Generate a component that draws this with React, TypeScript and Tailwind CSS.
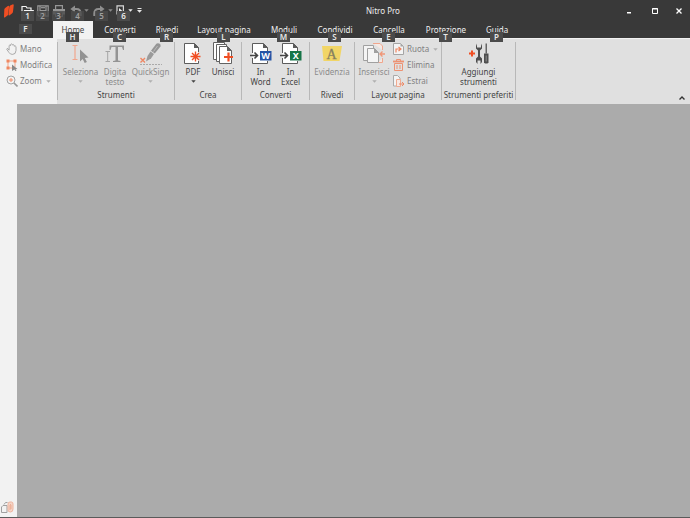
import type { ReactNode } from "react";

const orange = "#f04e23";

function KeyTip({ children, className = "" }: { children: ReactNode; className?: string }) {
  return (
    <span
      className={`absolute z-10 flex h-[10px] w-[13px] items-center justify-center text-[8px] leading-none font-semibold ${className}`}
    >
      {children}
    </span>
  );
}

function Caret({ className = "" }: { className?: string }) {
  return (
    <svg className={`h-[3px] w-[5px] shrink-0 ${className}`} viewBox="0 0 5 3" fill="currentColor">
      <path d="M0.3 0.3h4.4L2.5 2.7z" />
    </svg>
  );
}

function Logo() {
  return (
    <svg className="h-[14px] w-[10px]" viewBox="0 0 10 14" fill={orange}>
      <path d="M0.300 5.500Q0.400 4.500 1.200 3.900L3.800 2Q5.200 1.400 5 3L4.300 10Q4.200 11 3.400 11.600L1.200 13.200Q-0.200 14 0 12.200z" />
      <path d="M5.300 3Q5.400 2.200 6.200 1.600L8.400 0.400Q9.900-0.200 9.700 1.600L9 7.800Q8.800 8.900 8 9.500L5.600 11.300Q4.400 12 4.600 10.400z" />
    </svg>
  );
}

function OpenIcon() {
  return (
    <svg className="h-[12px] w-[13px]" viewBox="0 0 13 12">
      <path d="M1 10V1.500h4L6 3h4v2" fill="none" stroke="#f4f4f4" strokeWidth="1.200" />
      <path d="M3 5h10l-2 6H1z" fill="#f4f4f4" />
    </svg>
  );
}

function SaveIcon() {
  return (
    <svg className="h-[12px] w-[12px]" viewBox="0 0 12 12" fill="none" stroke="#9a9a9a" strokeWidth="1.200">
      <path d="M0.800 0.800h10.400v10.400H2L0.800 10zM3 1v4.500h6V1M3.500 11V8h5v3" />
      <path d="M4 2.700h4" />
    </svg>
  );
}

function PrintIcon() {
  return (
    <svg className="h-[12px] w-[12px]" viewBox="0 0 12 12" fill="#969696">
      <path d="M0 4h12v5.500h-2V7.500H2v2H0z" />
      <path d="M2.600 4V0.600h6.800V4M2.600 7.500v3.900h6.800V7.500" fill="none" stroke="#969696" strokeWidth="1.200" />
    </svg>
  );
}

function UndoIcon({ flip = false }: { flip?: boolean }) {
  return (
    <svg className={`h-[12px] w-[12px] ${flip ? "-scale-x-100" : ""}`} viewBox="0 0 12 12">
      <path d="M5 0.400v7.200L0.400 4z" fill="#8f8f8f" />
      <path d="M4 4h2.500Q10.600 4 10.600 8.500V11" fill="none" stroke="#8f8f8f" strokeWidth="2.200" />
    </svg>
  );
}

function TouchIcon() {
  return (
    <svg className="h-[12px] w-[9px]" viewBox="0 0 9 12">
      <path d="M1 9.500V0.800h6.400v7" fill="none" stroke="#d8d8d8" strokeWidth="1.200" />
      <path d="M3 3l4.500 4H5.400l1 3-1.200.5-1-3L3 8.800z" fill="#ededed" />
    </svg>
  );
}

function CustomizeIcon() {
  return (
    <svg className="h-[5px] w-[5px]" viewBox="0 0 5 5" fill="#e8e8e8">
      <path d="M0.500 0h4v1h-4zM0 2h5L2.500 4.800z" />
    </svg>
  );
}

function HandIcon() {
  return (
    <svg className="h-[12px] w-[12px]" viewBox="0 0 12 12" fill="none" stroke="#989898" strokeWidth="0.800" strokeLinejoin="round">
      <path d="M3.100 7.200V2.600Q3.800 1.500 4.600 2.600V1.500Q5.400 0.300 6.300 1.500V2Q7.300 0.900 8.100 2.200V3.200Q9.300 2.300 10 3.600V7.500Q9.800 11.400 6.600 11.400 4.100 11.500 3 9.500L0.800 6.500Q0.700 5.200 1.900 5.600L3.100 7.200" />
    </svg>
  );
}

function EditIcon() {
  return (
    <svg className="h-[12px] w-[12px]" viewBox="0 0 12 12">
      <path d="M2 2h7v6M2 2v7h4" fill="none" stroke="#f2a58a" />
      <path d="M0.500 0.500h3v3h-3zM7.500 0.500h3v3h-3zM0.500 7.500h3v3h-3z" fill="#ef8761" />
      <path d="M6 5.500 11.500 10l-2 .2 1 1.500-1.100.3-1-1.500L6 12z" fill="#888" />
    </svg>
  );
}

function ZoomIcon() {
  return (
    <svg className="h-[12px] w-[12px]" viewBox="0 0 12 12" fill="none">
      <circle cx="5" cy="5" r="4" stroke="#999" strokeWidth="0.900" />
      <path d="M8 8l3.500 3.500" stroke="#999" strokeWidth="1.600" />
      <path d="M3 5h4M5 3v4" stroke="#f08a66" />
    </svg>
  );
}

function SelectIcon() {
  return (
    <svg className="h-[24px] w-[22px]" viewBox="0 0 22 24">
      <path d="M2.500 3.500h5M5 3.500v14M2.500 17.500h5" fill="none" stroke="#f0a68d" strokeWidth="1.200" />
      <path d="M10 7.500 18.500 15.500l-3.700.4 2.100 4-2.200 1.100-2-4-2.700 2.500z" fill="#929292" />
    </svg>
  );
}

function TypeIcon() {
  return (
    <svg className="h-[24px] w-[22px]" viewBox="0 0 22 24">
      <path d="M5.500 3.500H20V8h-1l-1-3h-4v13.500l2.500.5v1H9v-1l2.500-.5V5H7.500l-1 3h-1z" fill="#949494" />
      <path d="M1.500 9.500H6M3.700 9.500v10M1.500 19.500H6" fill="none" stroke="#a5a5a5" />
    </svg>
  );
}

function SignIcon() {
  return (
    <svg className="h-[24px] w-[24px]" viewBox="0 0 24 24">
      <path d="M7 19.500 8.500 14 11.500 9.500 15 12 12 16.500z" fill="#9a9a9a" />
      <path d="M12 8.800 17.300 1.800Q18.500 0.600 20.300 1.600 22.200 2.700 21.500 4.500L15.800 11.400z" fill="#959595" />
      <path d="M18.500 4 14.500 9.500" stroke="#c8c8c8" strokeWidth="0.700" />
      <path d="M1.500 16l4.500 4.500m0-4.500-4.500 4.500" stroke="#ef8763" strokeWidth="1.400" />
      <path d="M1 22.500h22" stroke="#aaa" strokeDasharray="2 1" />
    </svg>
  );
}

function PdfIcon() {
  return (
    <svg className="h-[24px] w-[22px]" viewBox="0 0 22 24">
      <path d="M2.500 1.500h10l4 4v16h-14z" fill="#fff" />
      <path d="M16.500 10V5.500l-4-4h-10v20h14V19" fill="none" stroke="#5d5d5d" />
      <path d="M12 1v5h5z" fill="#5d5d5d" />
      <path d="M13.500 9.500v10M8.500 14.500h10M10 11l7 7M17 11l-7 7" stroke={orange} strokeWidth="1.400" />
    </svg>
  );
}

function MergeIcon() {
  return (
    <svg className="h-[24px] w-[24px]" viewBox="0 0 24 24">
      <g fill="#fff" stroke="#626262">
        <path d="M2.500 0.500h11v17h-11z" />
        <path d="M5.500 2.500h10v17h-10z" />
        <path d="M8.500 4.500h8l4 4v13h-12z" />
      </g>
      <path d="M16 4v5h5z" fill="#626262" />
      <path d="M17.500 10.500v9M13 15h9" stroke={orange} strokeWidth="2.200" />
    </svg>
  );
}

function ConvertIcon({ kind }: { kind: "W" | "X" }) {
  return (
    <svg className="h-[24px] w-[24px]" viewBox="0 0 24 24">
      <path d="M3.500 1.500h11l4 4v16h-15z" fill="#fff" />
      <path d="M3.500 11V1.500h11l4 4V10M3.500 16v5.500h15V19" fill="none" stroke="#5c5c5c" />
      <path d="M14 1v5h5z" fill="#5c5c5c" />
      <path d="M1 13.500h7M5.500 10.500l3 3-3 3" fill="none" stroke="#444" strokeWidth="1.600" />
      <path d="M11 9h11.500v9.500H11z" fill={kind === "W" ? "#2554a5" : "#177548"} />
      <text x="16.700" y="17" textAnchor="middle" fontSize="9" fontWeight="700" fill="#fff">
        {kind}
      </text>
    </svg>
  );
}

function HighlightIcon() {
  return (
    <svg className="h-[24px] w-[22px]" viewBox="0 0 22 24">
      <path d="M1 4h20l-2.500 15H2.500z" fill="#f1d566" />
      <text x="10.500" y="16.500" textAnchor="middle" fontSize="14" fontFamily="Liberation Serif, serif" fill="#858060" stroke="#858060" strokeWidth="0.300">
        A
      </text>
    </svg>
  );
}

function InsertIcon() {
  return (
    <svg className="h-[24px] w-[24px]" viewBox="0 0 24 24">
      <path d="M11 1.500h7l2.500 2.500v4M16 20.500h4.500V16" fill="#f5e9e4" stroke="#f0a68d" />
      <path d="M23 12h-5M20.500 9.500 18 12l2.500 2.500" fill="none" stroke="#ef9778" strokeWidth="1.400" />
      <g fill="#f4f4f4" stroke="#a0a0a0">
        <path d="M1.500 3.500h10v15h-10z" />
        <path d="M5.500 6.500h7l4 4v10h-11z" />
      </g>
      <path d="M12 6v5h5z" fill="#a0a0a0" />
    </svg>
  );
}

function RotateIcon() {
  return (
    <svg className="h-[12px] w-[11px]" viewBox="0 0 11 12">
      <path d="M0.500 0.500h7l3 3v8h-10z" fill="#f4f4f4" stroke="#a5a5a5" />
      <path d="M7.500 0.500v3h3z" fill="#a5a5a5" />
      <path d="M3 9.500V6h4M5.500 4 8 6 5.500 8" fill="none" stroke="#ee8561" strokeWidth="1.200" />
    </svg>
  );
}

function TrashIcon() {
  return (
    <svg className="h-[12px] w-[11px]" viewBox="0 0 11 12" fill="none" stroke="#ed9273">
      <path d="M0 2.500h11M3.500 2V0.500h4V2M1.500 4.500h8v7h-8zM4 6v4M7 6v4" />
      <path d="M0 2.500h11" strokeWidth="1.800" />
    </svg>
  );
}

function ExtractIcon() {
  return (
    <svg className="h-[12px] w-[12px]" viewBox="0 0 12 12">
      <path d="M0.500 0.500h4l2.500 2.500v8H0.500z" fill="#f4f4f4" stroke="#aaa" />
      <path d="M3.500 4.500h4v7h-4z" fill="#f7e8e2" stroke="#f0aa91" />
      <path d="M6 9h5M9 7l2 2-2 2" fill="none" stroke="#ed8966" />
    </svg>
  );
}

function ToolsIcon() {
  return (
    <svg className="h-[24px] w-[22px]" viewBox="0 0 22 24">
      <path d="M4 8.500v6M1 11.500h6" stroke={orange} strokeWidth="2" />
      <path d="M9 1.500 8 4v2.500l2 2v6l-2 2V20l1.500 2v-3.500h3V22l1.500-2v-3.500l-2-2v-6l2-2V4l-1-2.500V5.500H9z" fill="#4e4e4e" />
      <path d="M17.500 1.500h1.500v10h-1.500z" fill="#666" />
      <path d="M16 11.500h4.500v9l-1 1h-2.500l-1-1z" fill="#4e4e4e" />
      <path d="M18.200 13.500v6" stroke="#aaa" strokeWidth="0.700" />
    </svg>
  );
}

function PagesIcon() {
  return (
    <svg className="h-[12px] w-[13px]" viewBox="0 0 13 12" fill="none">
      <path d="M2 4.500h4v7H0.500V6zM3 3.500l1.500-2h2" stroke="#a0a0a0" />
      <path d="M7 9V3Q7 1 9 1h1.500Q12 1 12 3v5q0 3-2.500 3T7 9z" fill="#f4d5c8" stroke="#efb49e" />
      <path d="M9 9V4q.5-1.200 1 0v4" stroke="#e89b7d" strokeWidth="0.700" />
    </svg>
  );
}

const quickActions = [
  { tip: "1", label: "Apri", icon: <OpenIcon />, width: "w-[15px]", pos: "left-[1px]" },
  { tip: "2", label: "Salva", icon: <SaveIcon />, width: "w-4", pos: "left-[1px]", dim: true },
  { tip: "3", label: "Stampa", icon: <PrintIcon />, width: "w-4", pos: "left-[1px]", dim: true },
  { tip: "4", label: "Annulla", icon: <UndoIcon />, width: "w-[22px]", pos: "left-1", dim: true, menu: true },
  { tip: "5", label: "Ripristina", icon: <UndoIcon flip />, width: "w-6", pos: "left-[6px]", dim: true, menu: true },
  { tip: "6", label: "Selezione", icon: <TouchIcon />, width: "w-5", pos: "left-1", menu: true },
];

const tabs = [
  { label: "Home", tip: "H", width: "w-10", active: true },
  { label: "Converti", tip: "C", width: "w-[54px]" },
  { label: "Rivedi", tip: "R", width: "w-10" },
  { label: "Layout pagina", tip: "L", width: "w-[74px]" },
  { label: "Moduli", tip: "M", width: "w-[46px]" },
  { label: "Condividi", tip: "S", width: "w-14" },
  { label: "Cancella", tip: "E", width: "w-[52px]" },
  { label: "Protezione", tip: "T", width: "w-[62px]" },
  { label: "Guida", tip: "P", width: "w-10" },
];

function Tool({ icon, lines, width, dim = false, menu = false }: { icon: ReactNode; lines: string[]; width: string; dim?: boolean; menu?: boolean }) {
  return (
    <button type="button" className={`flex shrink-0 flex-col items-center whitespace-nowrap ${width} ${dim ? "text-[#8c8c8c]" : "text-[#444]"}`}>
      {icon}
      <span className="mt-px flex flex-col">
        {lines.map((line) => (
          <span key={line}>{line}</span>
        ))}
      </span>
      {menu && <Caret className={dim ? "mt-[3px] text-[#b0b0b0]" : "mt-[3px]"} />}
    </button>
  );
}

function SmallTool({ icon, label, menu = false }: { icon: ReactNode; label: string; menu?: boolean }) {
  return (
    <button type="button" className="flex h-4 items-center gap-[2px] whitespace-nowrap text-[#808080]">
      <span className="flex w-[13px] justify-center">{icon}</span>
      {label}
      {menu && <Caret className="ml-[2px] text-[#b0b0b0]" />}
    </button>
  );
}

function Group({ title, width, children }: { title: string; width: string; children: ReactNode }) {
  return (
    <section className={`flex shrink-0 flex-col border-r border-[#b8b8b8] ${width}`}>
      <div className="flex h-[50px] justify-center">{children}</div>
      <h2 className="text-center whitespace-nowrap text-[#444]">{title}</h2>
    </section>
  );
}

export default function App() {
  return (
    <div className="flex h-screen flex-col overflow-hidden bg-[#ababab] font-['Noto_Sans','Open_Sans',sans-serif] text-[8px] leading-[10px]">
      <header className="bg-[#393939] text-[#f0f0f0]">
        <div className="relative flex h-[21px] items-center">
          <span className="flex w-5 pl-1">
            <Logo />
          </span>
          {quickActions.map((action) => (
            <button
              key={action.tip}
              type="button"
              aria-label={action.label}
              className={`relative flex h-[21px] items-center ${action.width}`}
            >
              <span className="flex flex-1 justify-center">{action.icon}</span>
              {action.menu && <Caret className={action.dim ? "text-[#8a8a8a]" : "text-[#eee]"} />}
              <KeyTip className={`top-[11px] ${action.pos} ${action.dim ? "bg-[#4b4b4b]/80 text-[#a0a0a0]" : "bg-[#4b4b4b] text-[#e8e8e8]"}`}>
                {action.tip}
              </KeyTip>
            </button>
          ))}
          <button type="button" aria-label="Personalizza" className="ml-[2px] flex w-2 justify-center">
            <CustomizeIcon />
          </button>
          <h1 className="absolute left-1/2 w-[76px] text-center">Nitro Pro</h1>
          <div className="ml-auto flex items-center">
            <button type="button" aria-label="Riduci a icona" className="flex h-5 w-[26px] items-center justify-center">
              <svg className="h-2 w-2" viewBox="0 0 8 8"><path d="M2 5h4v1.500H2z" fill="#fff" /></svg>
            </button>
            <button type="button" aria-label="Ingrandisci" className="flex h-5 w-[26px] items-center justify-center">
              <svg className="h-2 w-2" viewBox="0 0 8 8"><path d="M1.500 1.500h5v5h-5zM1 2h6" fill="none" stroke="#fff" /></svg>
            </button>
            <button type="button" aria-label="Chiudi" className="flex h-5 w-[22px] items-center justify-center">
              <svg className="h-2 w-2" viewBox="0 0 8 8"><path d="M1.500 1.500l5 5m0-5-5 5" stroke="#fff" strokeWidth="1.300" /></svg>
            </button>
          </div>
        </div>

        <nav className="flex h-[17px]">
          <button type="button" aria-label="File" className="relative w-[53px]">
            <KeyTip className="top-[3px] left-[19px] bg-[#4b4b4b] text-[#e8e8e8]">F</KeyTip>
          </button>
          {tabs.map((tab) => (
            <button
              key={tab.label}
              type="button"
              className={`relative flex justify-center pt-1 whitespace-nowrap ${tab.width} ${tab.active ? "bg-[#f2f2f2] text-[#444]" : ""}`}
            >
              {tab.label}
              <KeyTip className="top-[11px] left-[calc(50%-7px)] bg-[#4b4b4b] text-[#e8e8e8]">{tab.tip}</KeyTip>
            </button>
          ))}
        </nav>
      </header>

      <div className="flex h-[66px] shrink-0 border-t border-[#f2f2f2] bg-[#e0e0e0]">
        <div className="-mt-px flex w-[57px] shrink-0 flex-col bg-[#f2f2f2] pt-[3px] pl-[5px]">
          <SmallTool icon={<HandIcon />} label="Mano" />
          <SmallTool icon={<EditIcon />} label="Modifica" />
          <SmallTool icon={<ZoomIcon />} label="Zoom" menu />
        </div>
        <div className="flex pt-[3px] pb-1">
          <Group title="Strumenti" width="w-[118px] border-l">
            <Tool icon={<SelectIcon />} lines={["Seleziona"]} width="w-[41px]" dim menu />
            <Tool icon={<TypeIcon />} lines={["Digita", "testo"]} width="w-7" dim />
            <Tool icon={<SignIcon />} lines={["QuickSign"]} width="w-[43px]" dim menu />
          </Group>
          <Group title="Crea" width="w-[67px]">
            <Tool icon={<PdfIcon />} lines={["PDF"]} width="w-[30px]" menu />
            <Tool icon={<MergeIcon />} lines={["Unisci"]} width="w-[30px]" />
          </Group>
          <Group title="Converti" width="w-[68px]">
            <Tool icon={<ConvertIcon kind="W" />} lines={["In", "Word"]} width="w-[30px]" />
            <Tool icon={<ConvertIcon kind="X" />} lines={["In", "Excel"]} width="w-[30px]" />
          </Group>
          <Group title="Rivedi" width="w-[45px]">
            <Tool icon={<HighlightIcon />} lines={["Evidenzia"]} width="w-10" dim />
          </Group>
          <Group title="Layout pagina" width="w-[87px]">
            <Tool icon={<InsertIcon />} lines={["Inserisci"]} width="w-9" dim menu />
            <div className="-mt-px flex w-[48px] flex-col">
              <SmallTool icon={<RotateIcon />} label="Ruota" menu />
              <SmallTool icon={<TrashIcon />} label="Elimina" />
              <SmallTool icon={<ExtractIcon />} label="Estrai" />
            </div>
          </Group>
          <Group title="Strumenti preferiti" width="w-[74px]">
            <Tool icon={<ToolsIcon />} lines={["Aggiungi", "strumenti"]} width="w-[42px]" />
          </Group>
        </div>
        <button type="button" aria-label="Comprimi barra multifunzione" className="mr-1 mb-1 ml-auto self-end">
          <svg className="h-[4px] w-[8px]" viewBox="0 0 8 4"><path d="M1.500 3.500 4 1l2.500 2.500" fill="none" stroke="#333" strokeWidth="1.400" /></svg>
        </button>
      </div>

      <div className="flex min-h-0 flex-1 border-b border-[#5a5a5a]">
        <aside className="flex w-[17px] flex-col justify-end bg-[#f2f2f2] pb-1">
          <button type="button" aria-label="Pagine" className="flex pl-px">
            <PagesIcon />
          </button>
        </aside>
        <main className="flex-1 bg-[#ababab]" />
      </div>
    </div>
  );
}
